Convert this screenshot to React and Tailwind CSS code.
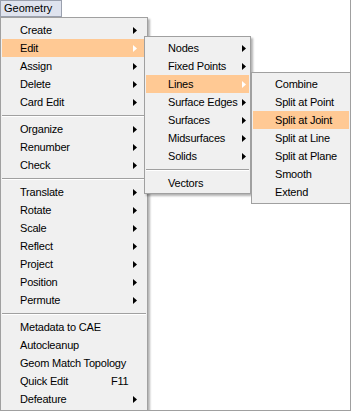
import React from "react";

const Arrow = ({ white }) => (
  <svg width="4" height="7" viewBox="0 0 4 7" className="shrink-0">
    <path d="M0 0 L4 3.5 L0 7Z" fill={white ? "#ffffff" : "#000000"} />
  </svg>
);

const Item = ({ label, arrow, hl, pl, pr, extra }) => (
  <div
    className={`mx-[1px] h-[18px] flex items-center justify-between ${pl} ${pr} ${
      hl ? "bg-[#ffc994]" : ""
    }`}
  >
    <span className="flex items-center">
      {extra ? <span className="w-[91px]">{label}</span> : label}
      {extra ? <span>{extra}</span> : null}
    </span>
    {arrow ? <Arrow white={hl} /> : null}
  </div>
);

const Sep = () => (
  <div className="h-[9px] mx-[1px] pt-[4px]">
    <div className="border-t border-[#a0a0a0] border-b border-b-white" />
  </div>
);

export default function App() {
  const mainGroups = [
    [["Create", 1], ["Edit", 1, 1], ["Assign", 1], ["Delete", 1], ["Card Edit", 1]],
    [["Organize", 1], ["Renumber", 1], ["Check", 1]],
    [
      ["Translate", 1],
      ["Rotate", 1],
      ["Scale", 1],
      ["Reflect", 1],
      ["Project", 1],
      ["Position", 1],
      ["Permute", 1],
    ],
    [
      ["Metadata to CAE"],
      ["Autocleanup"],
      ["Geom Match Topology"],
      ["Quick Edit", 0, 0, "F11"],
      ["Defeature", 1],
    ],
  ];
  const sub1 = [
    ["Nodes", 1],
    ["Fixed Points", 1],
    ["Lines", 1, 1],
    ["Surface Edges", 1],
    ["Surfaces", 1],
    ["Midsurfaces", 1],
    ["Solids", 1],
  ];
  const sub2 = [
    "Combine",
    "Split at Point",
    "Split at Joint",
    "Split at Line",
    "Split at Plane",
    "Smooth",
    "Extend",
  ];

  return (
    <div
      className="relative w-[351px] h-[411px] bg-white overflow-hidden text-black text-[11px] tracking-[-0.2px] leading-none border-r border-b border-[#a0a0a0]"
      style={{ fontFamily: '"Liberation Sans", Arial, sans-serif' }}
    >
      {/* menu bar button */}
      <div className="absolute left-0 top-0 w-[62px] h-[17px] bg-[#dfe3ee] border border-[#9aa0ae] flex items-center pl-[3px] tracking-normal">
        Geometry
      </div>

      {/* main menu */}
      <div className="absolute left-0 top-[17px] w-[148px] h-[394px] bg-[#f0f0f0] border border-[#a0a0a0] pt-[3px] shadow-[2px_2px_2px_rgba(0,0,0,0.3)]">
        {mainGroups.map((g, gi) => (
          <React.Fragment key={gi}>
            {gi > 0 ? <Sep /> : null}
            {g.map(([label, arrow, hl, extra]) => (
              <Item
                key={label}
                label={label}
                arrow={arrow}
                hl={hl}
                extra={extra}
                pl="pl-[18px]"
                pr="pr-[9px]"
              />
            ))}
          </React.Fragment>
        ))}
      </div>

      {/* submenu 1 */}
      <div className="absolute left-[144px] top-[36px] w-[107px] bg-[#f0f0f0] border border-[#a0a0a0] pt-[2px] pb-[1px] shadow-[2px_2px_2px_rgba(0,0,0,0.3)]">
        {sub1.map(([label, arrow, hl]) => (
          <Item key={label} label={label} arrow={arrow} hl={hl} pl="pl-[22px]" pr="pr-[3px]" />
        ))}
        <Sep />
        <Item label="Vectors" pl="pl-[22px]" pr="pr-[3px]" />
      </div>

      {/* submenu 2 */}
      <div className="absolute left-[251px] top-[72px] w-[100px] bg-[#f0f0f0] border border-[#a0a0a0] pt-[2px] pb-[2px]">
        {sub2.map((label) => (
          <Item
            key={label}
            label={label}
            hl={label === "Split at Joint"}
            pl="pl-[22px]"
            pr="pr-[3px]"
          />
        ))}
      </div>
    </div>
  );
}
